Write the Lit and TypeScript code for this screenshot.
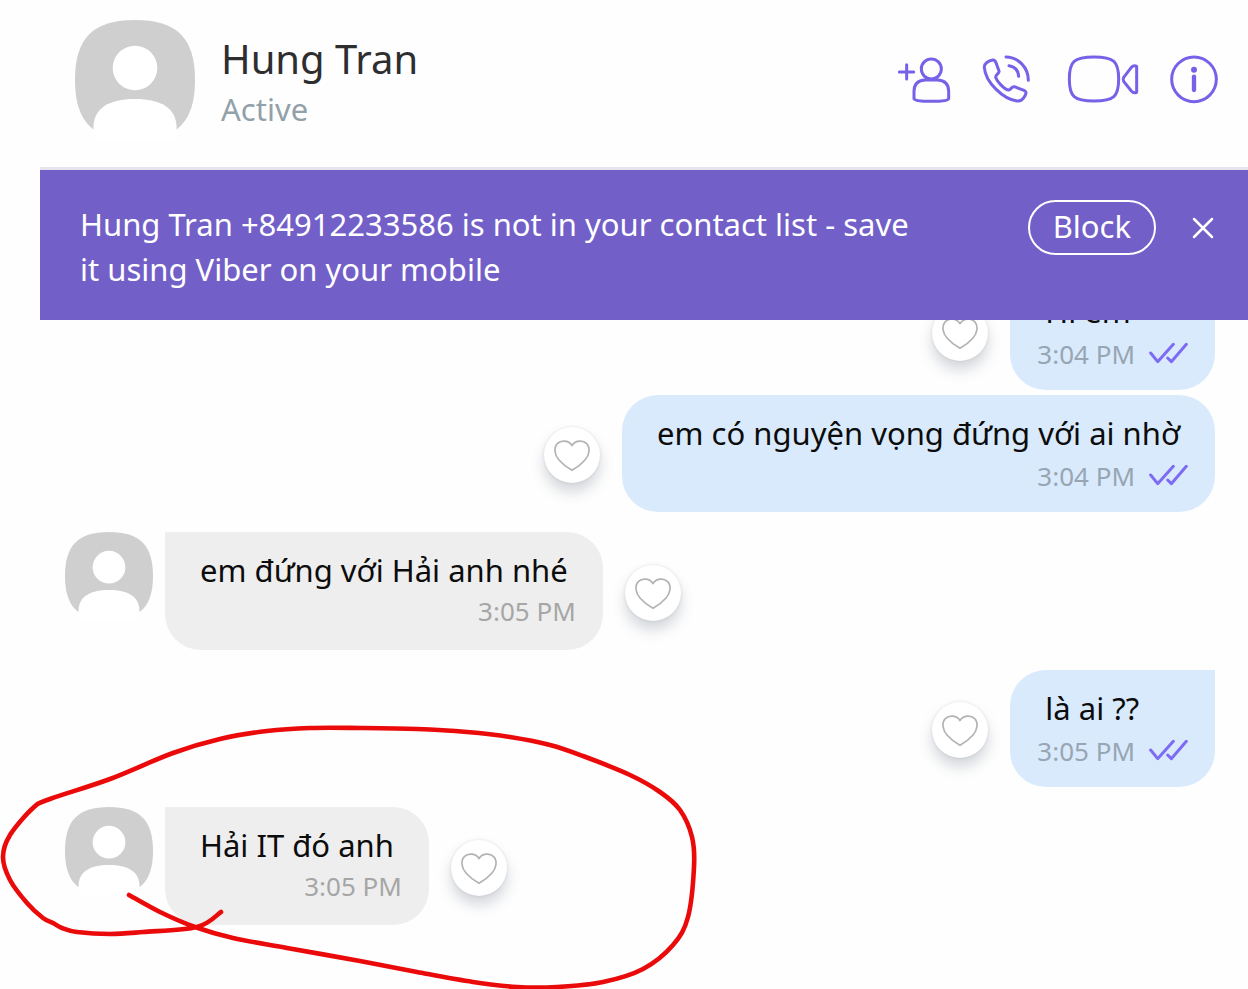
import { LitElement, html, svg, css, nothing } from "lit";
import { customElement, property } from "lit/decorators.js";

interface Message {
  text: string;
  time: string;
  own: boolean;
  startsGroup: boolean;
  circled?: boolean;
}

const MESSAGES: Message[] = [
  { text: "Hi em", time: "3:04 PM", own: true, startsGroup: true },
  { text: "em có nguyện vọng đứng với ai nhờ", time: "3:04 PM", own: true, startsGroup: false },
  { text: "em đứng với Hải anh nhé", time: "3:05 PM", own: false, startsGroup: true },
  { text: "là ai ??", time: "3:05 PM", own: true, startsGroup: true },
  { text: "Hải IT đó anh", time: "3:05 PM", own: false, startsGroup: true, circled: true },
];

// Points of the freehand pen stroke, in order of drawing.
const PEN_POINTS: [number, number][] = [
  [129, 175], [160, 192], [195, 207], [233, 218], [287, 228], [360, 241], [417, 252],
  [473, 262], [517, 267], [557, 267], [603, 262], [643, 249], [673, 225], [688, 197],
  [694, 147], [692, 117], [680, 90], [660, 72], [630, 55], [583, 36], [550, 25],
  [510, 17], [467, 12], [417, 9], [360, 8], [310, 8], [267, 11], [220, 19], [173, 33],
  [110, 59], [50, 79], [33, 88], [10, 115], [3, 137], [10, 160], [27, 183], [43, 198],
  [53, 203], [62, 208], [77, 212], [110, 214], [143, 212], [197, 207], [221, 192],
];

// Catmull-Rom spline through the points, written as cubic segments.
function smoothPath(points: [number, number][]): string {
  let d = `M${points[0][0]} ${points[0][1]}`;
  for (let i = 0; i < points.length - 1; i++) {
    const a = points[Math.max(i - 1, 0)];
    const b = points[i];
    const c = points[i + 1];
    const e = points[Math.min(i + 2, points.length - 1)];
    d += `C${b[0] + (c[0] - a[0]) / 6} ${b[1] + (c[1] - a[1]) / 6} ${c[0] - (e[0] - b[0]) / 6} ${c[1] - (e[1] - b[1]) / 6} ${c[0]} ${c[1]}`;
  }
  return d;
}

@customElement("user-avatar")
export class UserAvatar extends LitElement {
  static styles = css`
    :host { display: block; flex: none; }
    .picture { display: block; width: 100%; height: 100%; }
  `;
  render() {
    return html`<svg class="picture" viewBox="0 0 120 120" aria-hidden="true">
      <path fill="#cfcfcf" d="M0 60C0 18 18 0 60 0S120 18 120 60S102 120 60 120S0 102 0 60Z" />
      <circle cx="60" cy="48" r="22.3" fill="#fff" />
      <path fill="#fff" d="M18.4 121V108C18.4 88 34 79 60 79S101.6 88 101.6 108V121Z" />
    </svg>`;
  }
}

@customElement("chat-header")
export class ChatHeader extends LitElement {
  static styles = css`
    :host { display: block; }
    .bar {
      display: flex; align-items: center; gap: 26px;
      padding: 20px 29px 27px 35px;
      border-bottom: 3px solid #e7e4f0;
    }
    .avatar { width: 120px; height: 120px; }
    .who { flex: 1; min-width: 0; padding-top: 5px; }
    .name { margin: 0; font-size: 40px; font-weight: 400; line-height: 52px; color: #2e2e30; }
    .status { margin: 0; font-size: 31px; line-height: 48px; color: #92a1a9; }
    .actions { display: flex; gap: 30px; }
    .action { display: block; padding: 0; border: 0; background: none; cursor: pointer; }
    .icon {
      display: block; height: 50px; fill: none; stroke: #7562e8; stroke-width: 9;
      stroke-linecap: round; stroke-linejoin: round;
    }
    .dot { fill: #7562e8; stroke: none; }
    .stem { stroke-width: 13; }
  `;
  render() {
    return html`<header class="bar">
      <user-avatar class="avatar"></user-avatar>
      <div class="who">
        <h1 class="name">Hung Tran</h1>
        <p class="status">Active</p>
      </div>
      <nav class="actions">
        <button class="action" aria-label="Add contact">
          <svg class="icon" viewBox="51 43 162 150">
            <path d="M58 94H101M80 72V115" />
            <circle cx="154" cy="85" r="30" />
            <path d="M102 174V152C102 128 114 119 136 118H172C195 119 206 130 206 152V174Q206 182 154 182Q102 182 102 174Z" />
          </svg>
        </button>
        <button class="action" aria-label="Call">
          <svg class="icon" viewBox="303 43 162 150">
            <path d="M313 80C312 69 326 60 338 58C344 57 346 61 348 66L357 91C359 98 347 102 347 109C349 120 372 146 385 148C393 149 393 137 403 138L432 149C440 153 439 158 435 165C428 178 420 182 411 181C370 176 316 125 313 80Z" />
            <path d="M378 49C415 50 445 80 445 119M387 75C405 78 415 91 416 107" />
          </svg>
        </button>
        <button class="action" aria-label="Video call">
          <svg class="icon" viewBox="555 43 222 150">
            <path d="M568 115C568 62 582 49 642 49S716 62 716 115S702 181 642 181S568 168 568 115Z" />
            <path d="M731 110L754 80Q761 73 770 77V155Q761 159 754 151L731 122Q728 116 731 110Z" />
          </svg>
        </button>
        <button class="action" aria-label="Conversation info">
          <svg class="icon" viewBox="867 43 150 150">
            <circle cx="942" cy="116" r="67" />
            <circle class="dot" cx="942" cy="87" r="9" />
            <path class="stem" d="M942 108V148" />
          </svg>
        </button>
      </nav>
    </header>`;
  }
}

@customElement("contact-banner")
export class ContactBanner extends LitElement {
  static styles = css`
    :host { display: block; }
    .banner {
      display: flex; align-items: flex-start;
      padding: 30px 32px 28px 40px;
      background: #7260c8; color: #fff;
    }
    .notice { flex: 1; margin: 0; padding: 2px 96px 0 0; font-size: 31px; line-height: 45px; }
    .block {
      flex: none; height: 55px; padding: 0 23px 4px; margin-right: 34px;
      border: 2px solid #fff; border-radius: 28px; background: none;
      color: inherit; font: inherit; font-size: 31px; line-height: 44px; cursor: pointer;
    }
    .close {
      flex: none; display: flex; align-items: center; height: 55px;
      padding: 0; border: 0; background: none; cursor: pointer;
    }
    .cross { display: block; width: 26px; height: 26px; fill: none; stroke: #fff; stroke-width: 2.5; stroke-linecap: round; }
  `;
  render() {
    return html`<section class="banner">
      <p class="notice">Hung Tran +84912233586 is not in your contact list - save it using Viber on your mobile</p>
      <button class="block">Block</button>
      <button class="close" aria-label="Close">
        <svg class="cross" viewBox="0 0 26 26"><path d="M4 4L22 22M22 4L4 22" /></svg>
      </button>
    </section>`;
  }
}

@customElement("chat-message")
export class ChatMessage extends LitElement {
  @property({ attribute: false }) message!: Message;

  static styles = css`
    :host { display: block; }
    .row { position: relative; display: flex; align-items: center; padding: 0 33px 0 65px; }
    .row.own { flex-direction: row-reverse; }
    .avatar { align-self: flex-start; width: 88px; height: 88px; margin-right: 12px; }
    .bubble {
      padding: 16px 27px 20px; border-radius: 36px;
      background: #eee; color: #0c0c0c;
    }
    .own .bubble { padding-bottom: 17px; background: #d9eafd; }
    .first .bubble { border-top-left-radius: 0; }
    .own.first .bubble { border-radius: 36px 0 36px 36px; }
    .text { margin: 0; padding: 0 8px; font-size: 31px; line-height: 44px; }
    .meta {
      display: flex; justify-content: flex-end; align-items: center; gap: 14px;
      margin-top: 1px; font-size: 26px; line-height: 37px; color: #a6a6a6;
    }
    .own .meta { margin-top: 3px; color: #98a5b3; }
    .seen {
      display: block; width: 39px; height: 22px; margin-bottom: 4px; fill: none;
      stroke: #7d6cf3; stroke-width: 9; stroke-linecap: round; stroke-linejoin: round;
    }
    .like {
      flex: none; width: 56px; height: 56px; margin: 3px 22px 0; padding: 0;
      border: 0; border-radius: 50%; background: #fff; cursor: pointer;
      box-shadow: 0 0 3px rgba(40, 50, 60, 0.13), 0 9px 14px rgba(60, 75, 95, 0.22);
    }
    .heart { display: block; width: 56px; height: 56px; fill: none; stroke: #b2b2b2; stroke-width: 5; stroke-linejoin: round; }
    .pen {
      position: absolute; left: 0; top: -87px; width: 700px; height: 270px;
      fill: none; stroke: #ea0a0a; stroke-width: 4.6; stroke-linecap: round; stroke-linejoin: round;
      pointer-events: none;
    }
  `;
  render() {
    const m = this.message;
    return html`<article class="row ${m.own ? "own" : ""} ${m.startsGroup ? "first" : ""}">
      ${m.own ? nothing : html`<user-avatar class="avatar"></user-avatar>`}
      <div class="bubble">
        <p class="text">${m.text}</p>
        <div class="meta">
          <time>${m.time}</time>
          ${m.own
            ? html`<svg class="seen" viewBox="745 544 117 66" role="img" aria-label="Seen">
                <path d="M750 577L771 603L818 551M801 592L812 603L857 551" />
              </svg>`
            : nothing}
        </div>
      </div>
      <button class="like" aria-label="Like">
        <svg class="heart" viewBox="37 124 168 168">
          <path d="M121 180C112 164 89 162 77 174C65 187 69 208 82 223C94 237 110 248 121 254C132 248 148 237 160 223C173 208 177 187 165 174C153 162 130 164 121 180Z" />
        </svg>
      </button>
      ${m.circled
        ? html`<svg class="pen" viewBox="0 0 700 270" aria-hidden="true">${svg`<path d=${smoothPath(PEN_POINTS)} />`}</svg>`
        : nothing}
    </article>`;
  }
}

@customElement("app-root")
export class AppRoot extends LitElement {
  static styles = css`
    :host {
      display: flex; flex-direction: column; height: 100vh;
      background: #fefefe; font-family: "Noto Sans", "Open Sans", sans-serif;
    }
    .top { flex: none; margin-left: 40px; }
    .messages {
      flex: 1; min-height: 0; overflow: hidden;
      display: flex; flex-direction: column; justify-content: flex-end;
      padding-bottom: 64px;
    }
    .item { flex: none; margin-top: 20px; }
    .item.joined { margin-top: 5px; }
  `;
  render() {
    return html`
      <div class="top">
        <chat-header></chat-header>
        <contact-banner></contact-banner>
      </div>
      <main class="messages">
        ${MESSAGES.map(
          (m) => html`<chat-message class="item ${m.startsGroup ? "" : "joined"}" .message=${m}></chat-message>`,
        )}
      </main>
    `;
  }
}
